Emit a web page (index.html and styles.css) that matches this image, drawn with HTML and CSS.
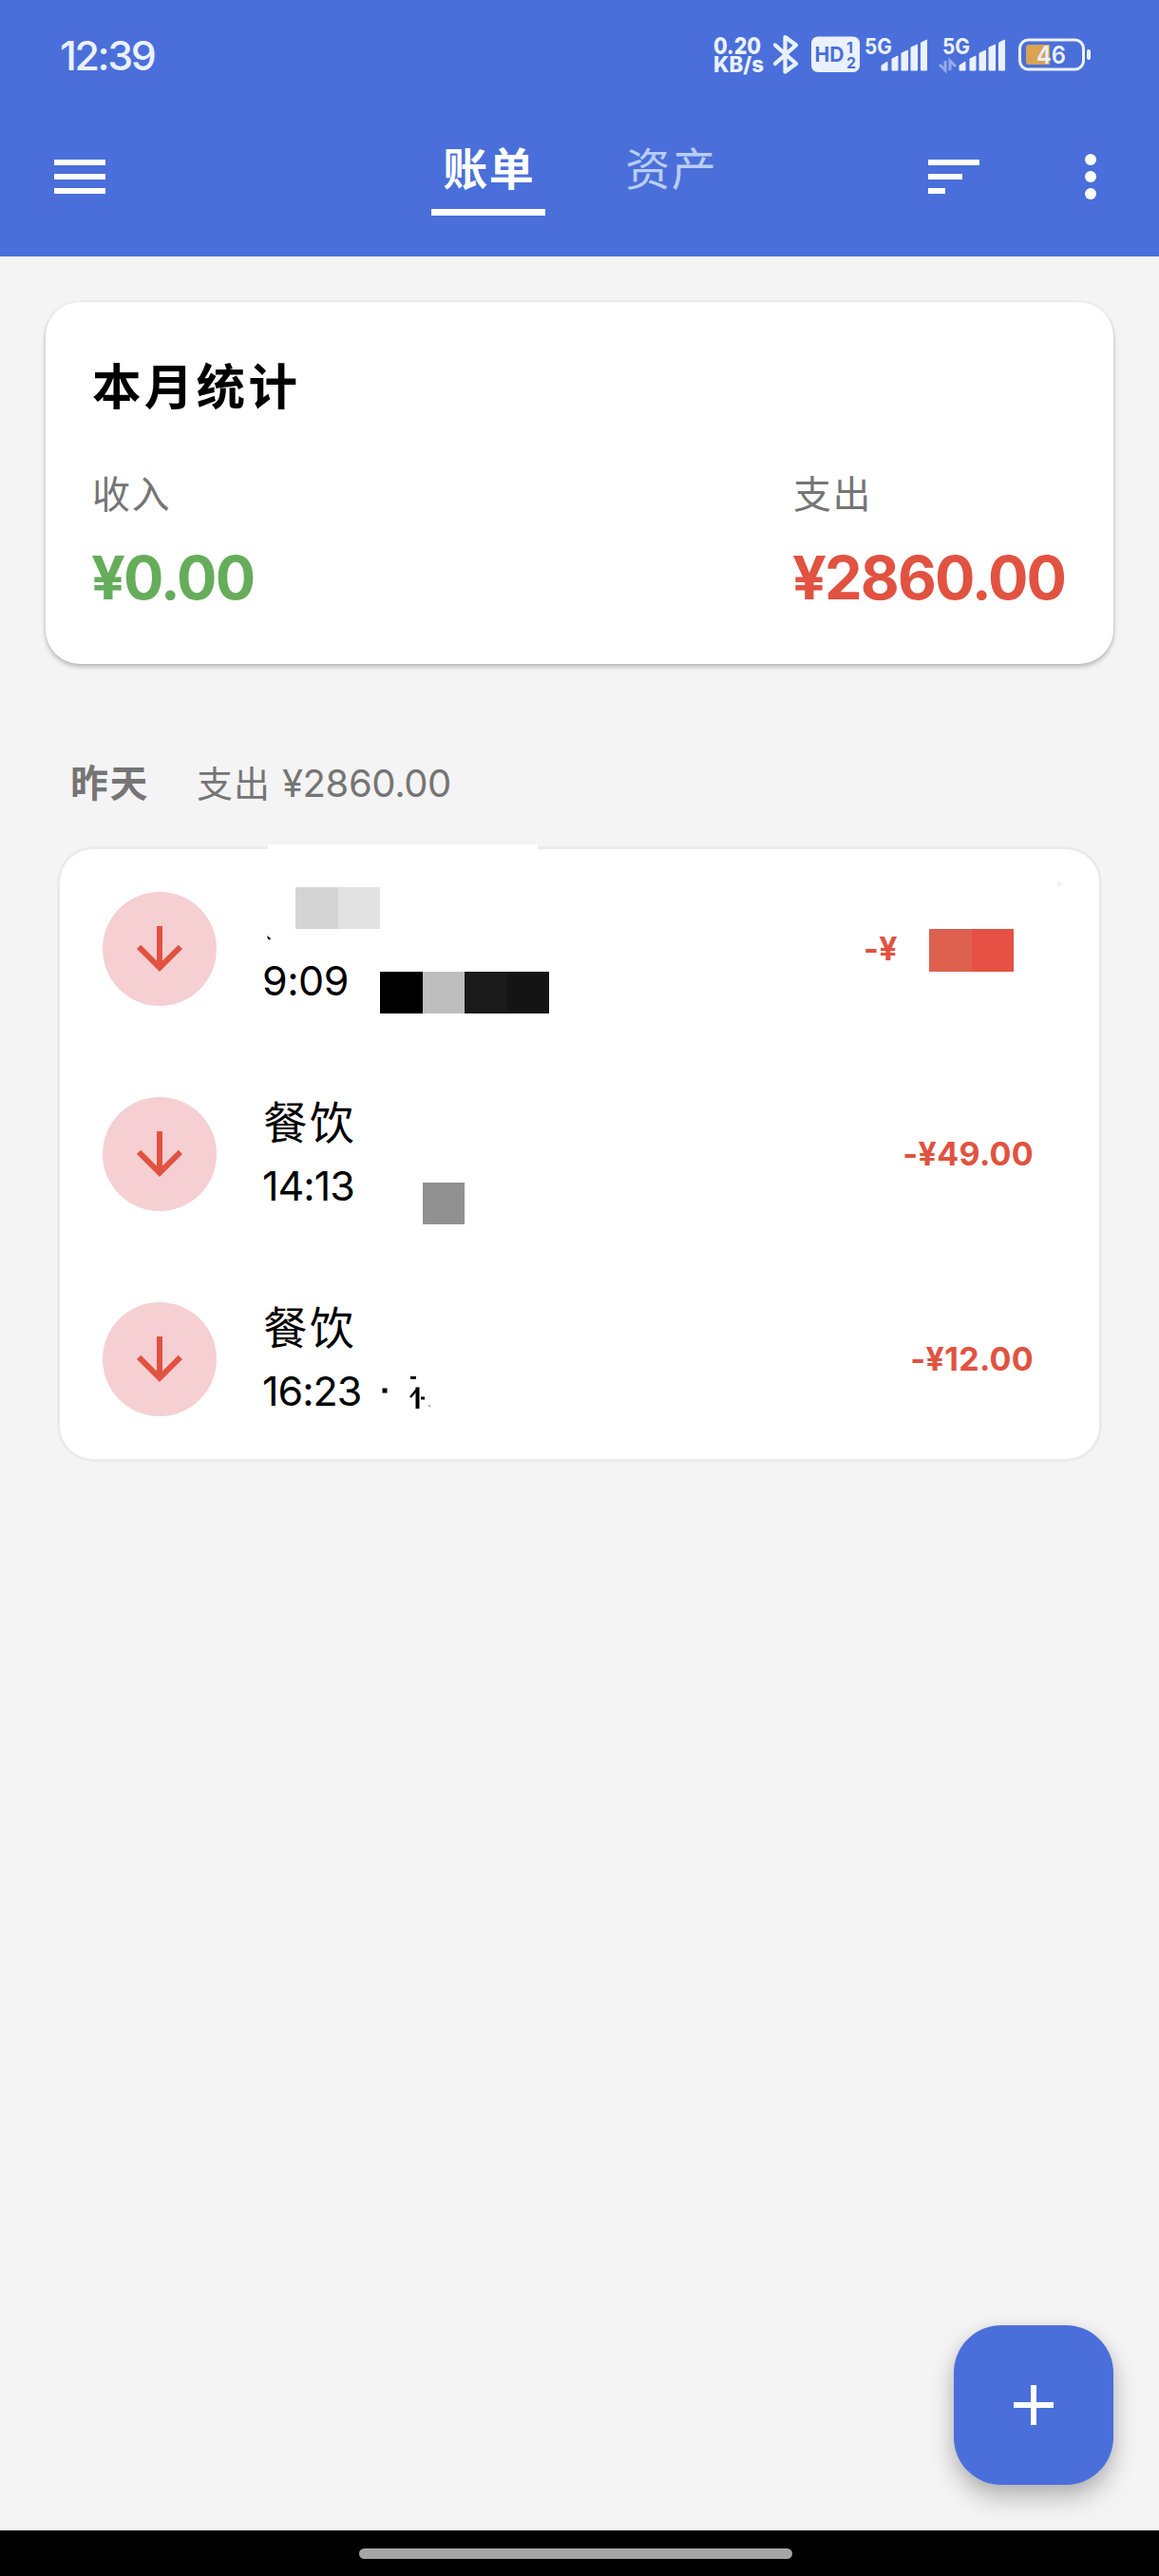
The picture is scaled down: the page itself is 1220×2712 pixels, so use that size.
FILE: index.html
```html
<!DOCTYPE html>
<html lang="zh-CN">
<head>
<meta charset="utf-8">
<title>账单</title>
<link rel="stylesheet" href="styles.css">
</head>
<body>
<header class="header">
  <div class="status">
    <span class="clock">12:39</span>
    <svg class="status-icons" width="400" height="60" viewBox="750 28 400 60">
      <g fill="#ebf1fd">
        <g font-size="25" font-weight="800">
          <text x="751" y="57" textLength="50" lengthAdjust="spacingAndGlyphs">0.20</text>
          <text x="751" y="76" font-size="22.5" textLength="53" lengthAdjust="spacingAndGlyphs">KB/s</text>
        </g>
        <path d="M816 47.500L838 67L826.500 75.500V39L838 47.500L816 67" fill="none" stroke="#ebf1fd" stroke-width="4.200" stroke-linejoin="round" stroke-linecap="round"/>
        <rect x="854" y="38.500" width="51" height="37.500" rx="7"/>
        <g fill="#4a6fda" font-weight="700">
          <text x="857.500" y="65" font-size="22" textLength="31" lengthAdjust="spacingAndGlyphs">HD</text>
          <text x="891" y="55.500" font-size="16" textLength="8">1</text>
          <text x="891" y="71.500" font-size="16" textLength="10" lengthAdjust="spacingAndGlyphs">2</text>
        </g>
        <text x="910" y="56.500" font-size="23" font-weight="700" textLength="29" lengthAdjust="spacingAndGlyphs">5G</text>
        <path id="bars" d="M928 69l6-4v9h-6zM939 62l6-3v15h-6zM949 56l6.500-3v21H949zM959 50l6.500-3v27H959zM969.500 45l6-3v32h-6z" stroke="#ebf1fd" stroke-width="1" stroke-linejoin="round"/>
        <text x="992" y="56.500" font-size="23" font-weight="700" textLength="29" lengthAdjust="spacingAndGlyphs">5G</text>
        <use href="#bars" x="82"/>
        <path d="M995 64v10l-6-6M1000 74V64l6 6" fill="none" stroke="#93abea" stroke-width="3"/>
        <rect x="1073.500" y="42" width="67" height="31" rx="9" fill="none" stroke="#ebf1fd" stroke-width="3"/>
        <rect x="1144" y="52" width="4" height="11" rx="2"/>
        <path d="M1083 47h22v21h-22q-3 0-3-3V50q0-3 3-3z" fill="#d9a353"/>
        <text x="1091" y="67" font-size="26" font-weight="600" textLength="31" lengthAdjust="spacingAndGlyphs">46</text>
      </g>
    </svg>
  </div>
  <nav class="appbar">
    <svg class="icon menu" viewBox="0 0 24 24"><path d="M3 18h18v-2H3v2zm0-5h18v-2H3v2zm0-7v2h18V6H3z"/></svg>
    <div class="tabs">
      <span class="tab active">账单</span>
      <span class="tab">资产</span>
    </div>
    <div class="actions">
      <svg class="icon" viewBox="0 0 24 24"><path d="M3 18h6v-2H3v2zM3 6v2h18V6H3zm0 7h12v-2H3v2z"/></svg>
      <svg class="icon" viewBox="0 0 24 24"><circle cx="12" cy="6" r="2"/><circle cx="12" cy="12" r="2"/><circle cx="12" cy="18" r="2"/></svg>
    </div>
  </nav>
</header>

<main class="content">
  <section class="summary">
    <h1 class="summary-title">本月统计</h1>
    <div class="totals">
      <div class="total income">
        <span class="label">收入</span>
        <span class="value">¥0.00</span>
      </div>
      <div class="total expense">
        <span class="label">支出</span>
        <span class="value">¥2860.00</span>
      </div>
    </div>
  </section>

  <div class="day">
    <b class="day-name">昨天</b>
    <span class="day-label">支出</span>
    <span class="day-sum">¥2860.00</span>
  </div>

  <section class="list">
    <i class="patch"></i>
    <i class="speck"></i>
    <article class="row">
      <span class="badge"><svg class="arrow" viewBox="0 0 24 24"><path d="M20 12l-1.410-1.410L13 16.170V4h-2v12.170l-5.580-5.590L4 12l8 8 8-8z"/></svg></span>
      <div class="info">
        <span class="name"></span>
        <span class="time short">9:09</span>
      </div>
      <span class="amount cut">-¥</span>
      <svg class="mosaic" viewBox="0 0 1100 216" width="1100" height="216">
        <g shape-rendering="crispEdges">
          <path fill="#d4d4d4" d="M251 43h45v44h-45z"/><path fill="#e2e2e2" d="M296 43h44v44h-44z"/>
          <path d="M340 132h45v44h-45z"/><path fill="#bebebe" d="M385 132h44v44h-44z"/>
          <path fill="#1a1a1a" d="M429 132h45v44h-45z"/><path fill="#141414" d="M474 132h44v44h-44z"/>
          <path fill="#de604f" d="M918 87h45v45h-45z"/><path fill="#e55144" d="M963 87h44v45h-44z"/>
        </g>
        <path d="M221 94l4 3-1 1.500-2-1z"/>
      </svg>
    </article>
    <article class="row">
      <span class="badge"><svg class="arrow" viewBox="0 0 24 24"><path d="M20 12l-1.410-1.410L13 16.170V4h-2v12.170l-5.580-5.590L4 12l8 8 8-8z"/></svg></span>
      <div class="info">
        <span class="name">餐饮</span>
        <span class="time">14:13</span>
      </div>
      <span class="amount">-¥49.00</span>
      <svg class="mosaic" viewBox="0 0 1100 216" width="1100" height="216"><path fill="#919191" shape-rendering="crispEdges" d="M385 138h44v44h-44z"/></svg>
    </article>
    <article class="row">
      <span class="badge"><svg class="arrow" viewBox="0 0 24 24"><path d="M20 12l-1.410-1.410L13 16.170V4h-2v12.170l-5.580-5.590L4 12l8 8 8-8z"/></svg></span>
      <div class="info">
        <span class="name">餐饮</span>
        <span class="time">16:23</span>
      </div>
      <span class="amount">-¥12.00</span>
      <svg class="mosaic" viewBox="0 0 1100 216" width="1100" height="216">
        <path d="M342.500 138.500h5v5h-5zM372 126h6v3h-6z"/>
        <path d="M379.500 137.500V160" fill="none" stroke="#000" stroke-width="4"/>
        <path d="M380 138.500l-8 9.500" fill="none" stroke="#000" stroke-width="2.500"/>
        <path d="M383 147.500h4v3h-4z"/><path d="M391 156l2 2" stroke="#777"/>
      </svg>
    </article>
  </section>
</main>

<button class="fab" aria-label="添加"><svg width="42" height="42" viewBox="0 0 42 42"><path d="M18 0h6v18h18v6H24v18h-6V24H0v-6h18z" fill="#fff"/></svg></button>
<footer class="navbar"><span class="pill"></span></footer>
</body>
</html>
```
FILE: styles.css
```css
* { box-sizing: border-box; }

body {
  margin: 0;
  width: 1220px;
  height: 2712px;
  display: flex;
  flex-direction: column;
  background: #f4f4f4;
  font-family: Inter, "Noto Sans CJK SC", sans-serif;
  color: #000;
  white-space: nowrap;
}

.header { height: 270px; background: #4a6fda; }

.status {
  height: 102px;
  padding: 28px 70px 0 63px;
  display: flex;
  justify-content: space-between;
}
.clock {
  font-size: 43px;
  font-weight: 500;
  line-height: 60px;
  letter-spacing: -2.400px;
  color: #ebf1fd;
}
.status-icons { display: block; }

.appbar {
  height: 168px;
  padding: 0 36px;
  display: grid;
  grid-template-columns: 1fr auto 1fr;
  align-items: center;
}
.icon { width: 72px; height: 72px; fill: #fff; display: block; }
.menu { margin-left: 12px; }
.actions { display: flex; justify-content: flex-end; gap: 72px; }

.tabs { display: flex; gap: 72px; align-self: start; margin-top: 33px; }
.tab {
  width: 120px;
  height: 92px;
  padding-left: 1.5px;
  border-bottom: 7px solid transparent;
  line-height: 85px;
  font-size: 47px;
  letter-spacing: 1.5px;
  text-align: center;
  color: #b9cdf6;
}
.tab.active { font-weight: 700; color: #fff; border-color: #fff; }

.content { flex: 1; padding: 48px 48px 0; }

.summary {
  height: 381px;
  padding: 54px 48px 0;
  border-radius: 36px;
  background: #fff;
  box-shadow: 0 3px 5px rgba(0, 0, 0, .24), 0 0 3px rgba(0, 0, 0, .08);
}
.summary-title {
  margin: 0;
  padding-left: 1px;
  font-size: 51.500px;
  font-weight: 700;
  line-height: 70px;
  letter-spacing: 3.300px;
}
.totals { display: flex; justify-content: space-between; margin-top: 49px; }
.total { display: flex; flex-direction: column; }
.expense { width: 290px; }
.label { padding-left: 1px; font-size: 40px; line-height: 60px; letter-spacing: 1.500px; color: #757575; }
.value { font-size: 63px; font-weight: 700; line-height: 80px; margin-top: 17px; letter-spacing: -1.900px; }
.income .value { color: #66ad5b; }
.expense .value { color: #e15241; }

.day {
  margin-top: 96px;
  padding-left: 26px;
  height: 60px;
  line-height: 60px;
  display: flex;
  color: #757575;
}
.day-name { width: 133px; font-size: 40px; letter-spacing: 1.500px; }
.day-label { width: 90px; font-size: 38px; letter-spacing: 1px; }
.day-sum { font-size: 40px; letter-spacing: -.4px; }

.list {
  position: relative;
  height: 648px;
  margin: 36px 12px 0;
  border-radius: 38px;
  background: #fff;
  box-shadow: inset 0 0 0 3px #eaeaea;
}
.patch { position: absolute; left: 222px; top: -2px; width: 284px; height: 8px; background: #fff; }
.speck {
  position: absolute;
  left: 1052px;
  top: 36px;
  width: 8px;
  height: 6px;
  background: #efefef;
  clip-path: polygon(20% 0, 100% 80%, 0 100%);
}
.row {
  position: relative;
  height: 216px;
  padding: 0 72px 0 48px;
  display: flex;
  align-items: center;
}
.badge {
  width: 120px;
  height: 120px;
  border-radius: 50%;
  background: #f6cfd3;
  display: flex;
  align-items: center;
  justify-content: center;
}
.arrow { width: 72px; height: 72px; fill: #e15241; }
.info { flex: 1; margin-left: 48px; display: flex; flex-direction: column; }
.name { height: 66px; padding-left: 1px; font-size: 46.500px; line-height: 66px; letter-spacing: 2.500px; }
.time { font-size: 43px; line-height: 66px; letter-spacing: -1px; }
.time.short { letter-spacing: -.5px; }
.amount { font-size: 34px; font-weight: 700; line-height: 50px; color: #e15241; letter-spacing: .3px; }
.amount.cut { margin-right: 143px; }
.mosaic { position: absolute; left: 0; top: 0; }

.fab {
  position: absolute;
  left: 1004px;
  top: 2448px;
  width: 168px;
  height: 168px;
  padding: 0;
  border: 0;
  border-radius: 50px;
  background: #4a6fda;
  display: flex;
  align-items: center;
  justify-content: center;
  box-shadow: 0 14px 26px rgba(0, 0, 0, .24), 0 2px 16px rgba(0, 0, 0, .08);
}

.navbar { height: 48px; padding-top: 19px; background: #000; }
.pill { display: block; width: 456px; height: 11px; margin: 0 auto; position: relative; left: -4px; border-radius: 6px; background: #a5a5a5; }
```
